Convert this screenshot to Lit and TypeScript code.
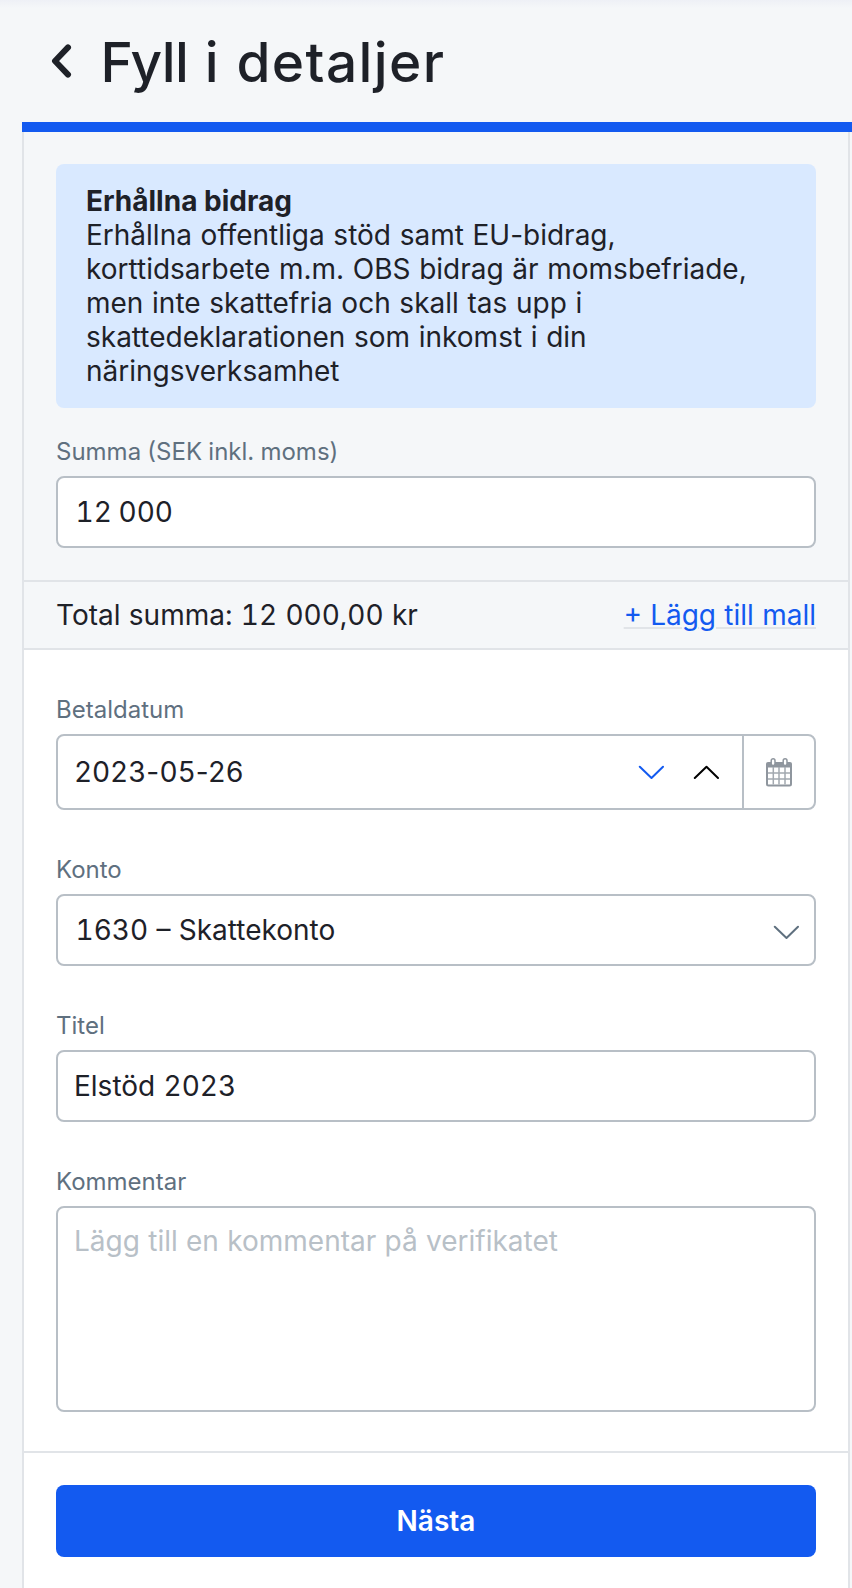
import { LitElement, html, css, svg } from "lit";
import { customElement, property } from "lit/decorators.js";

const chevron = (up: boolean) => svg`<path d=${up ? "M1.800 13 L13.500 1.800 L25 13" : "M1.800 1.800 L13.500 13 L25 1.800"}
  fill="none" stroke="currentColor" stroke-width="2" stroke-linecap="round" stroke-linejoin="round"/>`;

@customElement("form-field")
class FormField extends LitElement {
  @property() label = "";
  static styles = css`
    :host { display: block; }
    .label {
      display: block;
      font-size: 24px;
      line-height: 29px;
      word-spacing: -0.5px;
      color: #5f707f;
      margin-bottom: 10px;
    }
  `;
  render() {
    return html`<label class="label">${this.label}</label><slot></slot>`;
  }
}

@customElement("app-root")
class AppRoot extends LitElement {
  static styles = css`
    :host {
      display: block;
      box-sizing: border-box;
      height: 1588px;
      overflow: hidden;
      padding-left: 22px;
      background: linear-gradient(#eef0f6, #f5f7f9 8px);
      font-family: Inter, "Liberation Sans", sans-serif;
      font-size: 28px;
      font-weight: 400;
      line-height: 34px;
      word-spacing: 0.8px;
      color: #1e2128;
    }
    * { box-sizing: border-box; }
    .header {
      height: 122px;
      display: flex;
      align-items: center;
      padding-left: 29px;
    }
    .back { width: 21px; height: 34px; display: block; }
    .title {
      margin: 2px 0 0 28.5px;
      font-family: Inter, sans-serif;
      font-size: 55px;
      font-weight: 500;
      line-height: 66px;
      letter-spacing: 1.4px;
      word-spacing: 0.4px;
      white-space: nowrap;
    }
    .title .first { letter-spacing: -0.6px; }
    .bar { height: 10px; background: #135af0; }
    .panel {
      width: 828px;
      height: 1456px;
      border: solid #e1e4e8;
      border-width: 0 2px;
      background: #fff;
    }
    .top { height: 448px; background: #f5f7f9; padding: 32px 32px 0; }
    .alert {
      height: 244px;
      padding: 20px 30px;
      border-radius: 8px;
      background: #d9e9ff;
      margin-bottom: 29px;
    }
    .alert b { display: block; font-weight: 700; word-spacing: 0; }
    .total {
      height: 70px;
      display: flex;
      align-items: center;
      justify-content: space-between;
      padding: 0 32px;
      background: #f5f7f9;
      border: solid #e1e4e8;
      border-width: 2px 0;
      font-variant-numeric: tabular-nums;
    }
    .link {
      color: #135af0;
      text-decoration: underline 2px #e1e4e8;
      text-underline-offset: 2px;
    }
    .fields {
      padding: 45px 32px 0;
      height: 801px;
      display: flex;
      flex-direction: column;
    }
    .date, .konto, .titel { margin-bottom: 45px; }
    .box {
      display: flex;
      align-items: center;
      height: 72px;
      border: 2px solid #b8bfc6;
      border-radius: 8px;
      background: #fff;
    }
    .box.tall { height: 76px; }
    input, textarea {
      flex: 1;
      min-width: 0;
      border: 0;
      outline: 0;
      margin: 0;
      padding: 0 0 0 16px;
      background: transparent;
      font: inherit;
      font-variant-numeric: tabular-nums;
      word-spacing: inherit;
      color: inherit;
    }
    .lead { padding-left: 17.5px; }
    .sum { word-spacing: -0.8px; }
    .day { font-variant-numeric: normal; letter-spacing: 0.65px; padding-left: 16.5px; }
    textarea {
      display: block;
      width: 100%;
      height: 206px;
      border: 2px solid #b8bfc6;
      border-radius: 8px;
      padding: 16px;
      resize: none;
    }
    textarea::placeholder { color: #b8c0c7; opacity: 1; }
    .chev { width: 26px; height: 15px; display: block; }
    .blue { color: #135af0; margin-right: 29px; }
    .black { color: #000; margin-right: 23px; }
    .slate { color: #5f707f; margin: 4px 15px 0 0; }
    .cal {
      align-self: stretch;
      width: 72px;
      display: flex;
      align-items: center;
      justify-content: center;
      border-left: 2px solid #b8bfc6;
    }
    .cal svg { width: 26px; height: 30px; display: block; }
    .footer { border-top: 2px solid #e1e4e8; padding: 32px; }
    .next {
      display: block;
      width: 100%;
      height: 72px;
      border: 0;
      border-radius: 8px;
      background: #135af0;
      color: #fff;
      font: inherit;
      font-weight: 600;
      padding: 0;
    }
  `;

  render() {
    return html`
      <header class="header">
        <svg class="back" viewBox="0 0 21 34"><path d="M17 3.400 L4 17 L17 30.600" fill="none" stroke="#1e2128" stroke-width="6" stroke-linecap="round" stroke-linejoin="round"/></svg>
        <h1 class="title"><span class="first">Fyll</span> i detaljer</h1>
      </header>
      <div class="bar"></div>
      <main class="panel">
        <section class="top">
          <div class="alert"><b>Erhållna bidrag</b>Erhållna offentliga stöd samt EU-bidrag, korttidsarbete m.m. OBS bidrag är momsbefriade, men inte skattefria och skall tas upp i skattedeklarationen som inkomst i din näringsverksamhet</div>
          <form-field label="Summa (SEK inkl. moms)">
            <div class="box"><input class="lead sum" .value=${"12 000"} /></div>
          </form-field>
        </section>
        <section class="total">
          <span>Total summa: 12 000,00 kr</span>
          <a class="link">+ Lägg till mall</a>
        </section>
        <section class="fields">
          <form-field class="date" label="Betaldatum">
            <div class="box tall">
              <input class="day" .value=${"2023-05-26"} />
              <svg class="chev blue" viewBox="0 0 26 15">${chevron(false)}</svg>
              <svg class="chev black" viewBox="0 0 26 15">${chevron(true)}</svg>
              <div class="cal">
                <svg viewBox="0 0 26 30">
                  <rect x="1" y="7" width="24" height="21.500" rx="1.500" fill="#fff" stroke="#8f969e" stroke-width="2"/>
                  <path d="M0 7a2 2 0 0 1 2-2h22a2 2 0 0 1 2 2V10.500H0z" fill="#8f969e"/>
                  <path d="M7.300 10v17.500M13 10v17.500M19 10v17.500M2 16h22M2 22h22" stroke="#a3a9b0" stroke-width="1.500"/>
                  <rect x="5.200" y="1.800" width="3.800" height="6.800" rx="1.900" fill="#fff" stroke="#8f969e" stroke-width="1.500"/>
                  <rect x="17.200" y="1.800" width="3.800" height="6.800" rx="1.900" fill="#fff" stroke="#8f969e" stroke-width="1.500"/>
                </svg>
              </div>
            </div>
          </form-field>
          <form-field class="konto" label="Konto">
            <div class="box">
              <input class="lead" .value=${"1630 – Skattekonto"} />
              <svg class="chev slate" viewBox="0 0 26 15">${chevron(false)}</svg>
            </div>
          </form-field>
          <form-field class="titel" label="Titel">
            <div class="box"><input .value=${"Elstöd 2023"} /></div>
          </form-field>
          <form-field label="Kommentar">
            <textarea placeholder="Lägg till en kommentar på verifikatet"></textarea>
          </form-field>
        </section>
        <footer class="footer"><button class="next">Nästa</button></footer>
      </main>
    `;
  }
}
